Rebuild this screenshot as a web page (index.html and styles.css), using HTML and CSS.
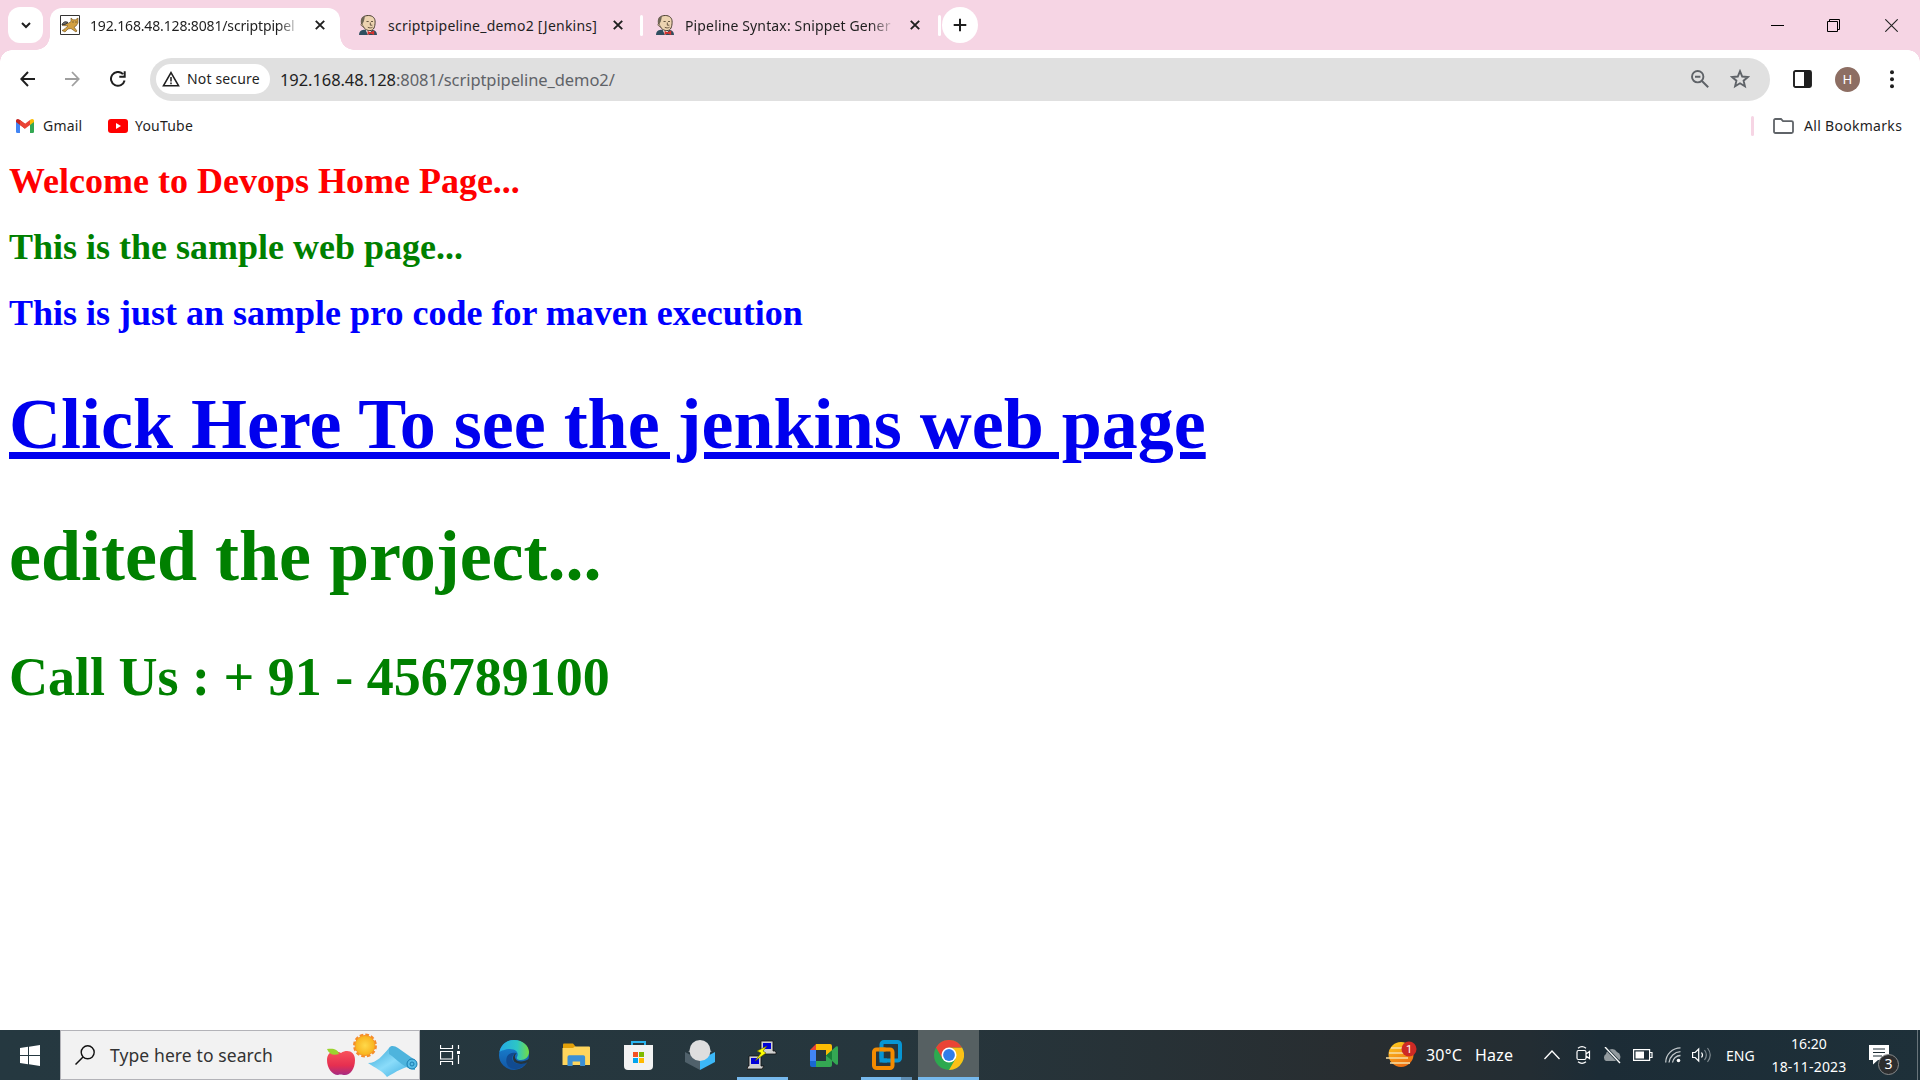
FILE: index.html
```html
<!DOCTYPE html>
<html lang="en">
<head>
<meta charset="utf-8">
<title>192.168.48.128:8081/scriptpipeline_demo2/</title>
<link rel="stylesheet" href="styles.css">
</head>
<body>
<svg class="defs" width="0" height="0">
  <symbol id="butler" viewBox="0 0 18 20">
    <path d="M0 20c.2-3.500 1.500-4.600 5-5.200h8c3 .6 4.800 1.700 5 5.200z" fill="#2f4f60"/>
    <path d="M6.500 14.500 9 20l4-5z" fill="#fff"/>
    <path d="M2.600 6.500C2.400 2.500 5.500.5 9.300.5c4.400 0 7 2.600 6.800 6.700-.1 4.300-1.100 8.400-5.200 8.400C6.200 15.600 3.400 12 2.600 6.500z" fill="#ecd3b0" stroke="#4a3f31" stroke-width="1"/>
    <path d="M2.400 10C.8 5 2.500 1.500 6.300.6 5.300 2.500 5.800 4.500 4.600 7z" fill="#6f6656"/>
    <path d="M3 8.200c-1.700.3-1 3.200.9 3.200" fill="#ecd3b0" stroke="#4a3f31" stroke-width=".8"/>
    <path d="M7.500 6.500h2.200M12 6.500h2M11.300 7.500v2.700h2M8.800 12.300c1.600.9 3.600.7 4.800-.1" fill="none" stroke="#5a4937" stroke-width=".9"/>
    <path d="m8.500 15.800 3 1.500 3.700-1.700v4.400l-3.700-1.500-3 1.500z" fill="#d8332e"/>
  </symbol>
  <symbol id="x" viewBox="0 0 10 10"><path d="m.8.8 8.400 8.400M9.200.8.8 9.200" stroke="#1f1f1f" stroke-width="1.900"/></symbol>
</svg>

<header class="tabstrip">
  <div class="tabsearch"><svg width="10" height="7" viewBox="0 0 10 7"><path d="m1 1 4 4 4-4" fill="none" stroke="#1f1f1f" stroke-width="2"/></svg></div>
  <div class="tab active">
    <svg class="fav" width="20" height="20" viewBox="0 0 20 20"><path d="M.5.500h19v19H.5z" fill="#fff" stroke="#333"/><path d="M2 15.500c3-1 3.500-3 6-4.500-2-1-4 .5-6-1 1-2 4-3 6-1.500l3-2V3l2 1.800h2.500L18 3v5l-2 3-2 1 3 4-1 1-5-3.500-3 .5-3 3z" fill="#d2a041" stroke="#6b4d1d" stroke-width=".6"/><path d="M2 10c1-3 3-4 6-2.500L6 9zM12.500 7h1M15.500 7h1" stroke="#333" fill="#777"/></svg>
    <span class="label t1">192.168.48.128:8081/scriptpipel</span>
    <svg width="10" height="10"><use href="#x"/></svg>
  </div>
  <div class="tab second">
    <svg class="fav" width="18" height="20"><use href="#butler"/></svg>
    <span class="label t2">scriptpipeline_demo2 [Jenkins]</span>
    <svg width="10" height="10"><use href="#x"/></svg>
  </div>
  <i class="sep"></i>
  <div class="tab third">
    <svg class="fav" width="18" height="20"><use href="#butler"/></svg>
    <span class="label t3">Pipeline Syntax: Snippet Gener</span>
    <svg width="10" height="10"><use href="#x"/></svg>
  </div>
  <i class="sep"></i>
  <div class="newtab"><svg width="14" height="14" viewBox="0 0 14 14"><path d="M7 .7v12.600M.7 7h12.600" stroke="#1f1f1f" stroke-width="2"/></svg></div>
  <div class="winctl">
    <svg width="13" height="13" viewBox="0 0 13 13"><path d="M0 6.500h13" stroke="#000"/></svg>
    <svg width="13" height="13" viewBox="0 0 13 13"><path d="M.5 2.500h10v10H.5zM2.500 2V.5h10v10H11" fill="none" stroke="#000"/></svg>
    <svg width="13" height="13" viewBox="0 0 13 13"><path d="m.3.3 12.400 12.400M12.700.3.300 12.700" stroke="#222" stroke-width="1.100"/></svg>
  </div>
</header>

<nav class="toolbar">
  <svg width="15" height="16" viewBox="0 0 15 16"><path d="M15 8H1.500M8 1 1.300 8 8 15" fill="none" stroke="#1f1f1f" stroke-width="2"/></svg>
  <svg width="15" height="16" viewBox="0 0 15 16"><path d="M0 8h13.500M7 1l6.700 7L7 15" fill="none" stroke="#9f9f9f" stroke-width="1.800"/></svg>
  <svg width="16" height="16" viewBox="0 0 16 16"><path d="M14.600 9.500A6.900 6.900 0 1 1 13 3.200M14.700.300v5.500H9.300" fill="none" stroke="#1f1f1f" stroke-width="2"/></svg>
  <div class="omnibox">
    <div class="chip">
      <svg width="18" height="16" viewBox="0 0 18 16"><path d="M9 1.700 16.500 14.700h-15z" fill="none" stroke="#1f1f1f" stroke-width="1.600"/><path d="M9 6v4.500M9 11.500v1.700" stroke="#1f1f1f" stroke-width="1.500"/></svg>
      <span class="ns">Not secure</span>
    </div>
    <span class="url"><b>192.168.48.128</b>:8081/scriptpipeline_demo2/</span>
    <div class="omniicons">
      <svg width="18" height="18" viewBox="0 0 18 18"><circle cx="6.700" cy="6.700" r="5.700" fill="none" stroke="#5f6368" stroke-width="1.900"/><path d="M4 6.700h5.400M10.700 10.700l6.500 6.500" stroke="#5f6368" stroke-width="2"/></svg>
      <svg width="20" height="20" viewBox="0 0 20 20"><path d="m10 2.200 2.200 5.300 5.700.5-4.300 3.700 1.300 5.600-4.900-3-4.900 3 1.300-5.600L2.100 8l5.700-.5z" fill="none" stroke="#5f6368" stroke-width="1.900"/></svg>
    </div>
  </div>
  <svg class="panel" width="19" height="18" viewBox="0 0 19 18"><rect x="1" y="1" width="17" height="16" rx="1.500" fill="#fff" stroke="#1f1f1f" stroke-width="1.900"/><path d="M11 1h7v16h-7z" fill="#1f1f1f"/></svg>
  <div class="avatar">H</div>
  <svg class="dots" width="4" height="19" viewBox="0 0 4 19"><circle cx="2" cy="2.300" r="2"/><circle cx="2" cy="9.300" r="2"/><circle cx="2" cy="16.300" r="2"/></svg>
</nav>

<nav class="bookmarks">
  <svg width="18" height="14" viewBox="0 0 18 14"><path d="M0 2h4v12H1.200Q0 14 0 12.800z" fill="#4285f4"/><path d="M14 2h4v10.800q0 1.200-1.200 1.200H14z" fill="#34a853"/><path d="M0 1.900C0 0 2 -.5 3.300.5L9 4.800v5L0 3z" fill="#c5221f"/><path d="M4 1.100 9 4.800l5-3.700v5L9 9.800 4 6z" fill="#ea4335"/><path d="m14 1 .7-.5C16-.5 18 0 18 1.900V3l-4 3z" fill="#fbbc04"/></svg>
  <span class="gm">Gmail</span>
  <svg class="yt" width="20" height="14" viewBox="0 0 20 14"><rect width="20" height="14" rx="3" fill="red"/><path d="m8 4 5 3-5 3z" fill="#fff"/></svg>
  <span class="ytt">YouTube</span>
  <i class="bsep"></i>
  <svg width="21" height="16" viewBox="0 0 21 16"><path d="M2.500 1H8l2 2.200h8.500Q20 3.200 20 4.500v9q0 1.500-1.500 1.500h-16Q1 15 1 13.500v-11Q1 1 2.500 1z" fill="none" stroke="#5f6368" stroke-width="1.800"/></svg>
  <span class="ab">All Bookmarks</span>
</nav>

<main class="page">
  <h1 class="red">Welcome to Devops Home Page...</h1>
  <h1 class="green">This is the sample web page...</h1>
  <h1 class="blue">This is just an sample pro code for maven execution</h1>
  <h1 class="big"><a href="#">Click Here To see the jenkins web page</a></h1>
  <h1 class="big green">edited the project...</h1>
  <h2 class="call green">Call Us : + 91 - 456789100</h2>
</main>

<footer class="taskbar">
  <div class="start"><svg width="20" height="21" viewBox="0 0 20 21"><path d="M0 3 8 1.800V10H0zM9 1.700 20 0v10H9zM0 11h8v8.200L0 18zM9 11h11v10L9 19.300z" fill="#fff"/></svg></div>
  <div class="search">
    <svg width="20" height="20" viewBox="0 0 20 20"><circle cx="12.700" cy="7.300" r="6.500" fill="none" stroke="#111" stroke-width="1.400"/><path d="m8 12-7.500 7.500" stroke="#111" stroke-width="1.500"/></svg>
    <span class="srch">Type here to search</span>
    <svg class="art" width="92" height="46" viewBox="0 0 92 46">
      <defs><linearGradient id="ap" x2="0" y2="1"><stop stop-color="#f8525a"/><stop offset=".6" stop-color="#e62f50"/><stop offset="1" stop-color="#a52b84"/></linearGradient><linearGradient id="mt" x2="1" y2="1"><stop stop-color="#38a5d4"/><stop offset=".5" stop-color="#8adcfa"/><stop offset="1" stop-color="#36a7dc"/></linearGradient><radialGradient id="sn"><stop stop-color="#ffd94a"/><stop offset="1" stop-color="#f8b21d"/></radialGradient></defs>
      <path d="M15 20c6-4 14-2 14 7 0 9-5 15-10 15-3 0-4-1-7 0C6 42 1 35 1 27c0-8 7-11 14-7z" fill="url(#ap)"/><path d="M13 21C7 23 3 21 1 16c6-1 11 0 12 5z" fill="#9bd32f"/>
      <circle cx="39" cy="12.500" r="10.700" fill="none" stroke="#f58b2c" stroke-width="2.500" stroke-dasharray="3.600 2"/><circle cx="39" cy="12.500" r="10" fill="url(#sn)" stroke="#f69a25"/>
      <path d="M42 30c9 0 15-8 21-15l25 18c-10 0-18 6-27 11-4-6-12-9-19-14z" fill="url(#mt)"/><path d="M63 15c2-3 6-2 9 0l17 12v10c-10-1-17-10-26-16z" fill="#4eb4dd"/><circle cx="86" cy="31" r="5" fill="#56bce6" stroke="#1a7db0"/><circle cx="86" cy="31" r="2" fill="none" stroke="#1a7db0"/>
    </svg>
  </div>
  <div class="tv"><svg width="20" height="20" viewBox="0 0 20 20"><path d="M.5 0v3.500h12V0M.5 20v-3.500h12V20M.5 6.500h12v7.500H.5zM18.500 0v4M18.500 10v9" fill="none" stroke="#fff" stroke-width="1.200"/><path d="M17 6h3v3h-3z" fill="#fff"/></svg></div>
  <div class="app"><svg width="30" height="30" viewBox="0 0 30 30"><defs><linearGradient id="e1"><stop stop-color="#24a9e5"/><stop offset=".6" stop-color="#2dc6c5"/><stop offset="1" stop-color="#73dc43"/></linearGradient><linearGradient id="e2" x2="0" y2="1"><stop stop-color="#1989d8"/><stop offset="1" stop-color="#1256a5"/></linearGradient></defs><circle cx="15" cy="15" r="15" fill="url(#e2)"/><path d="M.5 12C2 4 8 0 15 0c9 0 15 6 15 12 0 5-4 8-8 8-3 0-5-1-4-3 2-3 0-8-7-8C6 9 2 11 .5 12z" fill="url(#e1)"/><path d="M17 13c-4 2-5 6-2 9 4 3 9 2 13 0-5 8-15 9-19 4-4-6-1-15 8-13z" fill="#114b91"/><path d="M18 13c-3 2-3 6 1 8 4 1 8 0 12-3v3l-3 1.500c-5 2.500-10 1.500-13-1-2-3-1-8 3-8.500z" fill="#25343c"/></svg></div>
  <div class="app"><svg width="28" height="24" viewBox="0 0 28 24"><path d="M1 1.500Q1 .5 2 .5h9l2.500 3L11 7H1z" fill="#e3a008"/><path d="M.5 5H11l2-1.500h14q1 0 1 1V22H.5z" fill="#ffd55c"/><path d="M5.500 23V14q0-1.800 1.800-1.800h14q1.800 0 1.800 1.800v9h-5v-4.500h-7.500V23z" fill="#3b8fd4"/></svg></div>
  <div class="app"><svg width="29" height="30" viewBox="0 0 29 30"><path d="M8 7V2h13v5" fill="none" stroke="#29b3ee" stroke-width="2"/><path d="M0 5h29v21q0 4-4 4H4q-4 0-4-4z" fill="#f2f2f2"/><path d="M9 12h5v5H9z" fill="#f25022"/><path d="M15 12h5v5h-5z" fill="#7fba00"/><path d="M9 18h5v5H9z" fill="#00a4ef"/><path d="M15 18h5v5h-5z" fill="#ffb900"/></svg></div>
  <div class="app"><svg width="30" height="30" viewBox="0 0 30 30"><path d="m0 12 15 8v10L0 22z" fill="#50616b"/><path d="m30 12-15 8v10l15-8z" fill="#3cb8f8"/><path d="m3 11 12 9 12-9z" fill="#8e979b"/><circle cx="15" cy="10.500" r="10.500" fill="#dedede"/></svg></div>
  <div class="app run"><svg width="30" height="30" viewBox="0 0 30 30"><g stroke="#111" stroke-width=".8"><path d="M14 1h12v10h2l1 1v2H14l-1-2 1-1z" fill="#d0d0d0"/><path d="M2 16h12v10h3l-2 3H0l1-3h1z" fill="#d0d0d0"/></g><path d="M16 3h8v6h-8zM4 18h8v6H4z" fill="#0000d8"/><path d="m20 6-10 5 4 2-6 8 11-8-3-2z" fill="#ff0" stroke="#555500" stroke-width=".6"/></svg></div>
  <div class="app"><svg width="28" height="23" viewBox="0 0 28 23"><path d="M0 6 6 0v6z" fill="#ea4335"/><path d="M6 0h14q2 0 2 2v5l-6 5V6H6z" fill="#fbbc04"/><path d="M0 6h6v11H0z" fill="#4285f4"/><path d="M0 17h6v6H2q-2 0-2-2z" fill="#1967d2"/><path d="M6 17h10v-6l6 5v5q0 2-2 2H6z" fill="#34a853"/><path d="m16 11.500 10-9q2-1 2 1v16q0 2-2 1z" fill="#34a853"/><path d="m16 11.500 6-5v10z" fill="#188038"/></svg></div>
  <div class="app run multi"><svg width="30" height="30" viewBox="0 0 30 30"><rect x="9.500" y="2" width="18.500" height="18.500" rx="2.500" fill="none" stroke="#0795d3" stroke-width="4"/><rect x="2" y="9.500" width="18.500" height="18.500" rx="2.500" fill="none" stroke="#f38b00" stroke-width="4"/><path d="M9.500 8v12.500H15" fill="none" stroke="#0795d3" stroke-width="4"/><path d="M7.500 9.500h6" stroke="#f38b00" stroke-width="4"/></svg></div>
  <div class="app current"><svg width="30" height="30" viewBox="0 0 30 30"><circle cx="15" cy="15" r="15" fill="#2da94f"/><path d="M15 30 21.500 18.700 15 7.500h13A15 15 0 0 1 15 30z" fill="#fbc116"/><path d="M2 7.500A15 15 0 0 1 28 7.500H15L8.500 18.700z" fill="#ea4335"/><circle cx="15" cy="15" r="7.500" fill="#fff"/><circle cx="15" cy="15" r="5.900" fill="#2f7de9"/></svg></div>
  <div class="tray">
    <svg width="32" height="28" viewBox="0 0 32 28"><defs><linearGradient id="wt" x2=".4" y2="1"><stop stop-color="#ffd21f"/><stop offset="1" stop-color="#ee7012"/></linearGradient></defs><circle cx="15" cy="13.500" r="12.500" fill="url(#wt)"/><path d="M5 7h12M3 12h15M0 17h22M4 22h20" stroke="#f7dfa6" stroke-width="1.700"/><circle cx="23" cy="8" r="7.500" fill="#cd2a25"/><text x="23" y="12" text-anchor="middle" class="wn">1</text></svg>
    <span class="weather">30°C</span><span class="weather">Haze</span>
    <svg width="16" height="10" viewBox="0 0 16 10"><path d="m.5 9 7.500-8 7.500 8" fill="none" stroke="#fff" stroke-width="1.300"/></svg>
    <svg width="15" height="18" viewBox="0 0 15 18"><path d="M2 2.200Q6-.8 10 2.200M2 15.800Q6 18.800 10 15.800M2.500 4.500h6q1.500 0 1.500 1.500v6q0 1.500-1.500 1.500h-6Q1 13.500 1 12V6q0-1.500 1.500-1.500zM10 8l3.500-2.500v7L10 10" fill="none" stroke="#fff" stroke-width="1.200"/></svg>
    <svg width="20" height="17" viewBox="0 0 20 17"><path d="M4 14a4 4 0 0 1 0-7 6 6 0 0 1 11-2 5 5 0 0 1 1 9z" fill="#929a9e"/><path d="m3 0 15 16" stroke="#23343c" stroke-width="3"/><path d="m3 0 15 16" stroke="#fff" stroke-width="1.300"/></svg>
    <svg width="20" height="12" viewBox="0 0 20 12"><path d="M.6.600h16v10.800H.6zM17 3.500h2v5h-2" fill="none" stroke="#fff" stroke-width="1.200"/><path d="M2.500 2.500H11v7H2.500z" fill="#fff"/></svg>
    <svg width="16" height="16" viewBox="0 0 16 16"><path d="M.7 15.500A15 15 0 0 1 15.500.8M4 15.500A12 12 0 0 1 15.500 4.700M7.500 15.500A8 8 0 0 1 15.500 8.500" fill="none" stroke="#c3c9cc" stroke-width="1.300"/><circle cx="13.500" cy="13.500" r="1.800" fill="#fff"/></svg>
    <svg width="20" height="16" viewBox="0 0 20 16"><path d="M.6 5.500h2.600l3.500-3.500v12l-3.500-3.500H.6z" fill="none" stroke="#fff" stroke-width="1.200"/><path d="M9.500 5.500q2 2.500 0 5" fill="none" stroke="#fff" stroke-width="1.200"/><path d="M12.500 3q3.700 5 0 10M15.500 1q5.500 7 0 14" fill="none" stroke="#7f8a90" stroke-width="1.200"/></svg>
    <span class="eng">ENG</span>
    <div class="clock"><span class="time">16:20</span><span class="date">18-11-2023</span></div>
    <div class="note"><svg width="20" height="20" viewBox="0 0 20 20"><path d="M0 0h20v15H9l-5 4.500V15H0z" fill="#fff"/><path d="M4 4h12M4 7.500h12M4 11h9" stroke="#1f2e36" stroke-width="1.200"/></svg><span class="badge">3</span></div>
    <i class="peek"></i>
  </div>
</footer>
</body>
</html>
```
FILE: styles.css
```css
* { box-sizing: border-box; }
body { margin: 0; width: 1920px; height: 1080px; overflow: hidden; display: flex; flex-direction: column; background: #fff; color: #1f1f1f; font-family: "Noto Sans", "Open Sans", sans-serif; font-size: 14px; white-space: nowrap; }
svg { display: block; flex: none; }
i { flex: none; }
.defs { position: absolute; }

.tabstrip { height: 50px; flex: none; display: flex; align-items: center; background: #f6d5e4; padding-left: 8px; }
.tabsearch { width: 35px; height: 36px; border-radius: 12px; background: #fff; display: flex; align-items: center; justify-content: center; }
.tab { display: flex; align-items: center; height: 42px; }
.active { position: relative; width: 290px; margin: 8px 0 0 7px; padding: 0 15px 8px 10px; background: #fff; border-radius: 12px 12px 0 0; }
.active::before, .active::after { content: ""; position: absolute; bottom: 0; width: 14px; height: 14px; }
.active::before { left: -14px; background: radial-gradient(circle at 0 0, transparent 13.500px, #fff 14px); }
.active::after { right: -14px; background: radial-gradient(circle at 100% 0, transparent 13.500px, #fff 14px); }
.label { flex: none; }
.t1 { margin-left: 10px; width: 210px; margin-right: 15px; letter-spacing: -.15px; -webkit-mask: linear-gradient(90deg, #000 188px, transparent 211px); }
.second { width: 300px; padding-left: 19px; }
.t2 { margin-left: 11px; width: 216px; margin-right: 9px; letter-spacing: .23px; }
.sep { width: 3px; height: 21px; border-radius: 2px; background: #fff; }
.third { width: 295px; padding-left: 13px; }
.t3 { margin-left: 11px; width: 210px; margin-right: 15px; letter-spacing: .14px; -webkit-mask: linear-gradient(90deg, #000 185px, transparent 211px); }
.newtab { width: 36px; height: 36px; border-radius: 50%; background: #fff; margin-left: 1px; display: flex; align-items: center; justify-content: center; }
.winctl { margin-left: auto; padding-right: 22px; display: flex; gap: 43px; }
.winctl svg:last-child { margin-left: 2px; }

.toolbar { height: 58px; flex: none; display: flex; align-items: center; padding-left: 20px; background: radial-gradient(circle at 12px 12px, #fff 11.500px, #f6d5e4 12px) 0 0 / 12px 12px no-repeat, radial-gradient(circle at 0 12px, #fff 11.500px, #f6d5e4 12px) 100% 0 / 12px 12px no-repeat, #fff; }
.toolbar > svg:nth-child(2) { margin-left: 30px; }
.toolbar > svg:nth-child(3) { margin-left: 30px; }
.omnibox { margin-left: 24px; width: 1620px; height: 43px; border-radius: 22px; background: #e0e0e0; display: flex; align-items: center; padding-left: 6px; }
.chip { width: 114px; height: 30px; border-radius: 15px; background: #fff; display: flex; align-items: center; gap: 7px; padding: 0 0 1px 6px; }
.ns { letter-spacing: .15px; }
.url { margin-left: 10px; font-size: 16.500px; letter-spacing: -.08px; color: #5f6368; }
.url b { font-weight: 400; color: #1f1f1f; }
.omniicons { margin-left: auto; display: flex; align-items: center; gap: 21px; padding-right: 20px; }
.panel { margin-left: 23px; }
.avatar { width: 25px; height: 25px; margin-left: 23px; border-radius: 50%; background: #8d6e63; color: #fff; font: 13px/25px Roboto, sans-serif; text-align: center; }
.dots { margin-left: 30px; fill: #1f1f1f; }

.bookmarks { height: 36px; flex: none; display: flex; align-items: center; padding: 0 18px 1px 16px; letter-spacing: .2px; }
.gm { margin-left: 9px; width: 38px; }
.yt { margin-left: 27px; }
.ytt { margin-left: 7px; }
.bsep { width: 3px; height: 20px; border-radius: 2px; background: #f6d5e4; margin: 0 19px 0 auto; }
.ab { margin-left: 10px; width: 98px; letter-spacing: .3px; }

.page { flex: 1; padding: 16px 0 0 9px; font-family: "Liberation Serif", serif; }
h1, h2 { margin: 0; font-size: 36px; line-height: 42px; height: 66px; }
.red { color: red; }
.green { color: green; }
.blue { color: blue; }
.big { font-size: 72px; line-height: 82px; height: 132px; }
.blue + .big { padding-top: 25px; height: 157px; }
.big a { color: #00e; }
.call { margin-top: -1px; font-size: 54px; line-height: 62px; }

.taskbar { height: 50px; flex: none; display: flex; align-items: stretch; color: #fff; background: linear-gradient(90deg, #253840 0, #26363d 900px, #282d30 1370px, #232d33 1530px, #1c2c36 1600px, #1e3039 1920px); }
.start { width: 60px; display: flex; align-items: center; justify-content: center; }
.search { width: 360px; background: #f2f2f2; border: 1px solid #b3b3b8; color: #333; display: flex; align-items: center; padding-left: 14px; }
.srch { margin: -1px 0 0 15px; font-size: 17.500px; letter-spacing: .1px; }
.art { margin: 2px 1px 0 auto; }
.tv { width: 63px; padding: 15px 0 0 20px; }
.app { width: 62px; position: relative; display: flex; align-items: center; justify-content: center; }
.run::after, .current::after { content: ""; position: absolute; left: 6px; bottom: 0; width: 51px; height: 3px; background: #76b9ed; }
.multi { width: 63px; }
.multi::after { background: linear-gradient(90deg, #76b9ed 40px, #5d8db3 40px); }
.current { width: 61px; background: #566062; }
.current::after { left: 0; width: 61px; }
.tray { margin-left: auto; width: 534px; display: grid; grid-template-columns: 40px 49px 69px 32px 26px 31px 32px 27px 34px 33px 110px 48px 3px; align-items: center; }
.weather { font-size: 16px; letter-spacing: .2px; }
.wn { fill: #fff; font: 11px Roboto, sans-serif; }
.clock { display: grid; justify-items: center; line-height: 23px; margin: -1px 9px 0 -1px; }
.date { letter-spacing: .2px; }
.note { position: relative; }
.badge { position: absolute; left: 9px; top: 9px; width: 21px; height: 21px; border: 1px solid #87898a; border-radius: 50%; background: #2c2d2e; font-size: 14px; line-height: 18px; text-align: center; }
.peek { width: 1px; height: 50px; background: #68747a; }
```
